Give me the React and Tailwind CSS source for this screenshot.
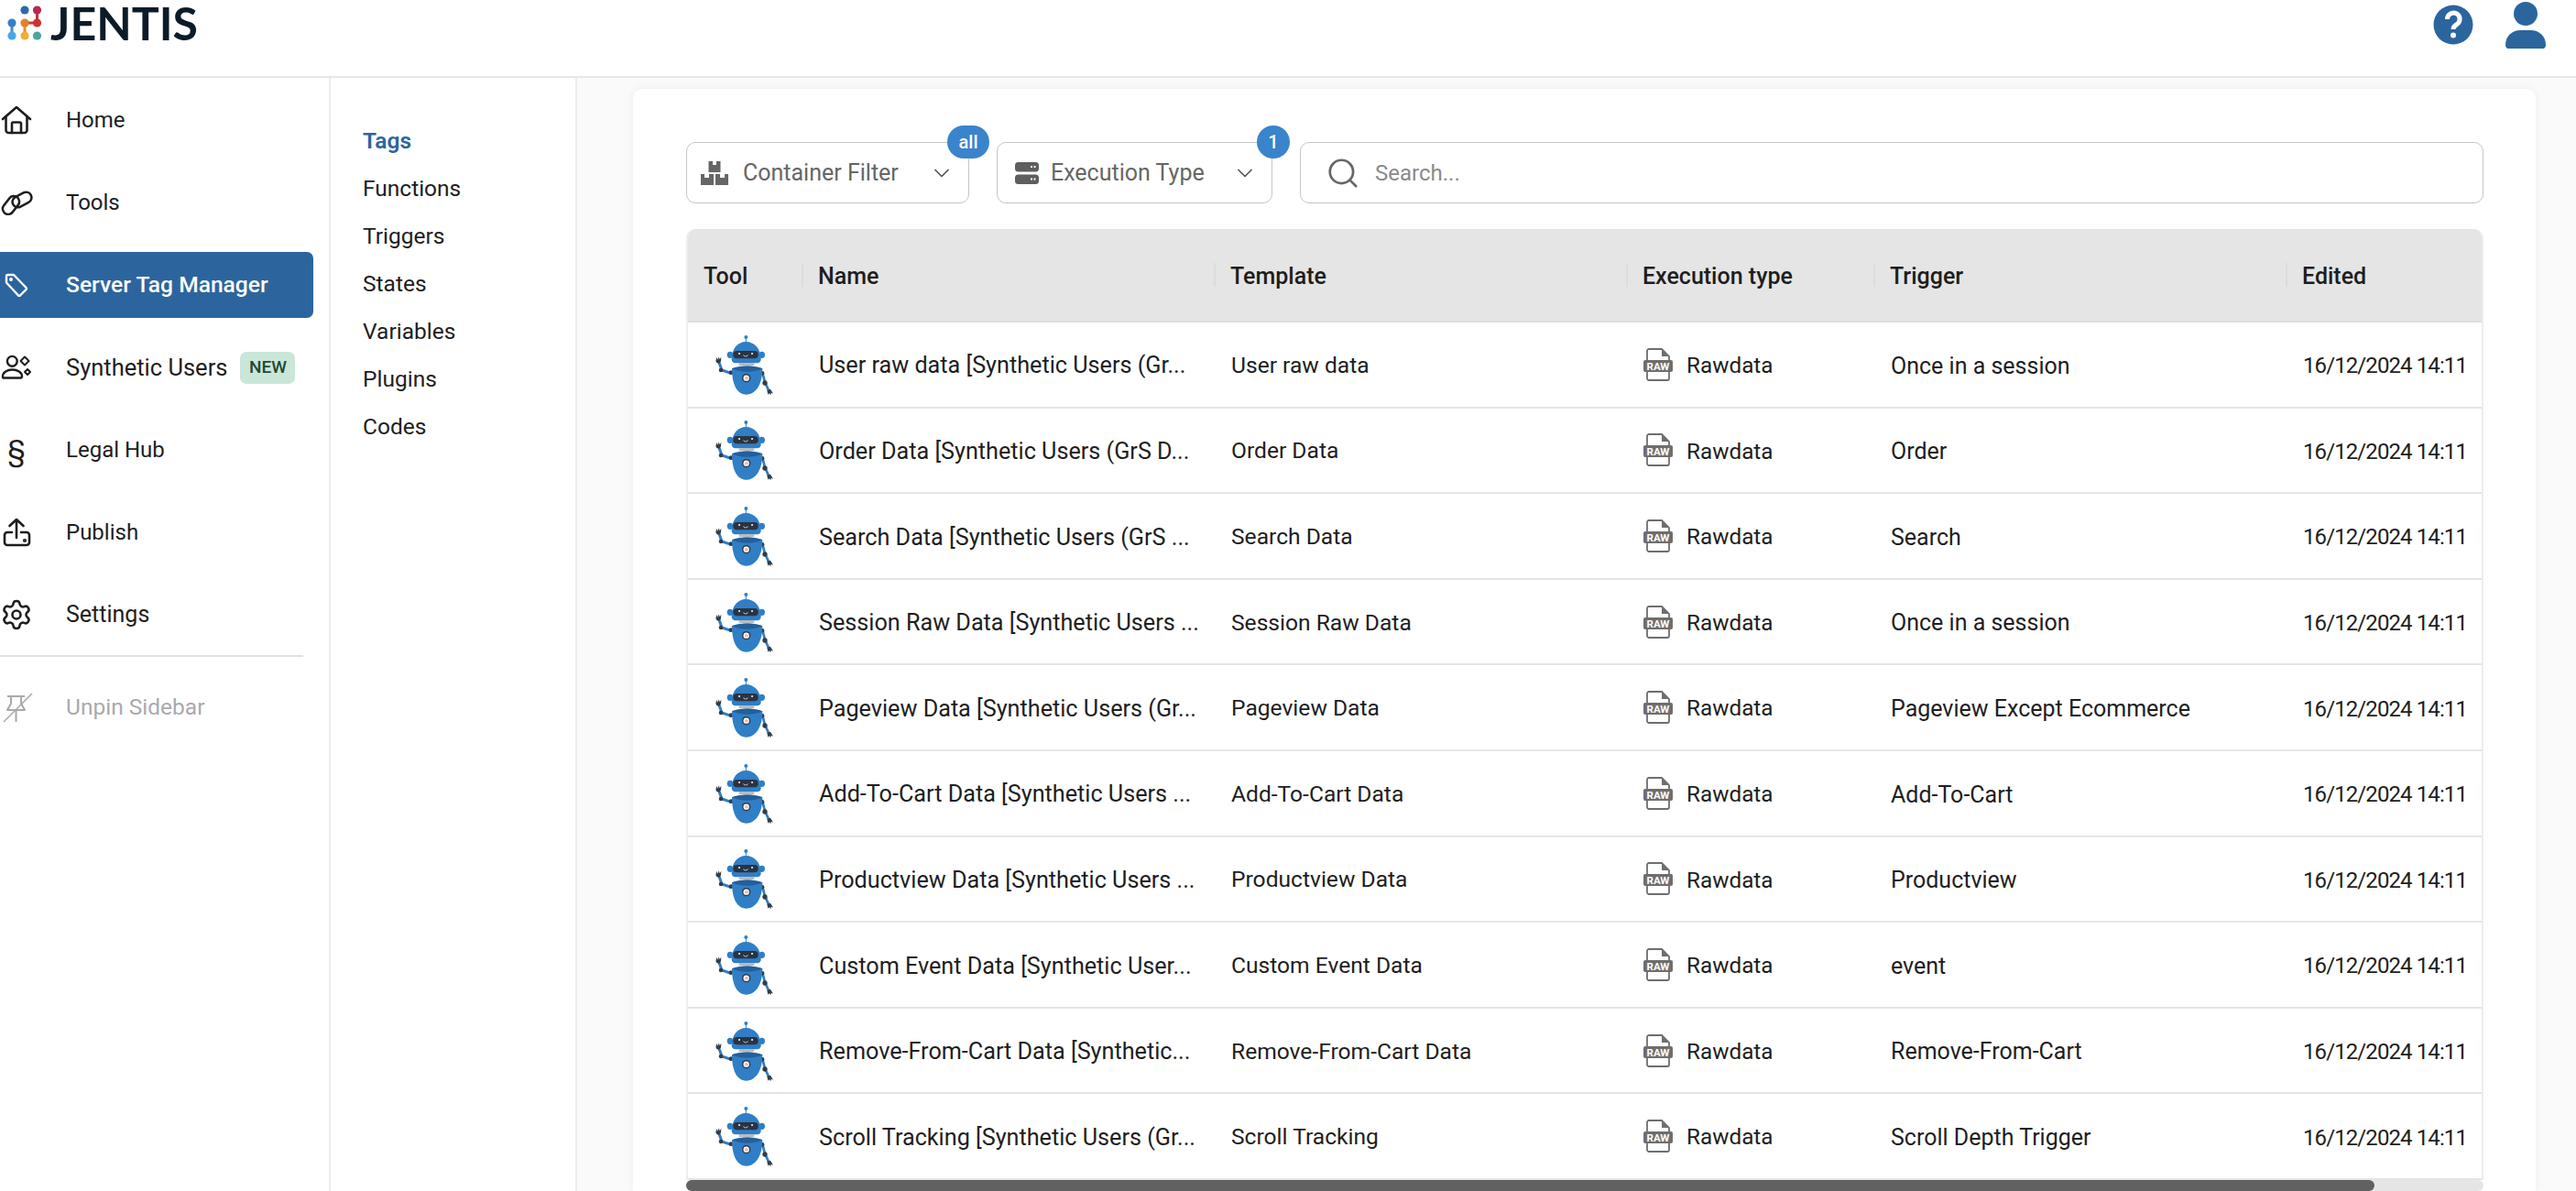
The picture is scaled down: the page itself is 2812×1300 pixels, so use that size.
import React from 'react'
import { ChevronDown, Search, Settings } from 'lucide-react'

const rows = [
  ['User raw data [Synthetic Users (Gr...', 'User raw data', 'Once in a session'],
  ['Order Data [Synthetic Users (GrS D...', 'Order Data', 'Order'],
  ['Search Data [Synthetic Users (GrS ...', 'Search Data', 'Search'],
  ['Session Raw Data [Synthetic Users ...', 'Session Raw Data', 'Once in a session'],
  ['Pageview Data [Synthetic Users (Gr...', 'Pageview Data', 'Pageview Except Ecommerce'],
  ['Add-To-Cart Data [Synthetic Users ...', 'Add-To-Cart Data', 'Add-To-Cart'],
  ['Productview Data [Synthetic Users ...', 'Productview Data', 'Productview'],
  ['Custom Event Data [Synthetic User...', 'Custom Event Data', 'event'],
  ['Remove-From-Cart Data [Synthetic...', 'Remove-From-Cart Data', 'Remove-From-Cart'],
  ['Scroll Tracking [Synthetic Users (Gr...', 'Scroll Tracking', 'Scroll Depth Trigger'],
]

const subNav = ['Functions', 'Triggers', 'States', 'Variables', 'Plugins', 'Codes']

const Logo = () => (
  <svg width="44" height="40" viewBox="6 5 40 40" fill="none">
    <path d="M38.5 11V25" stroke="#c4303f" strokeWidth="3" />
    <path d="M25 25H38.5" stroke="#d0382f" strokeWidth="3" />
    <path d="M25 25V39" stroke="#ee8c34" strokeWidth="3" />
    <path d="M11 25V39" stroke="#3d8fd6" strokeWidth="3" />
    <circle cx="25" cy="11" r="4.6" fill="#2b6ca8" />
    <circle cx="38.5" cy="11" r="4.6" fill="#b5284d" />
    <circle cx="11" cy="25" r="4.6" fill="#3480c8" />
    <circle cx="25" cy="25" r="4.6" fill="#e67e30" />
    <circle cx="38.5" cy="25" r="4.6" fill="#cc3330" />
    <circle cx="11" cy="39" r="4.6" fill="#4aa6e6" />
    <circle cx="25" cy="39" r="4.6" fill="#f0ad3a" />
    <circle cx="38.5" cy="39" r="4.6" fill="#4ba59c" />
  </svg>
)

const HomeIcon = () => (
  <svg width="36" height="34" viewBox="0 0 36 34" fill="none" stroke="#1e1e1e" strokeWidth="2.6" strokeLinecap="round" strokeLinejoin="round">
    <path d="M3 16 18 3l15 13" />
    <path d="M6.500 13v15a3 3 0 0 0 3 3h17a3 3 0 0 0 3-3V13" />
    <path d="M13 31V21a1.500 1.500 0 0 1 1.500-1.500h7A1.500 1.500 0 0 1 23 21v10" />
  </svg>
)

const ToolsIcon = () => (
  <svg width="36" height="28" viewBox="0 0 36 28" fill="none" stroke="#1e1e1e" strokeWidth="2.500">
    <rect x="1" y="11" width="22" height="12" rx="6" transform="rotate(-52 12 17)" />
    <rect x="13" y="5" width="22" height="12" rx="6" transform="rotate(-28 24 11)" />
  </svg>
)

const TagIcon = () => (
  <svg width="26" height="26" viewBox="0 0 26 26" fill="none" stroke="#fff" strokeWidth="2.4" strokeLinejoin="round">
    <path d="M2 3.500A1.500 1.500 0 0 1 3.500 2H10l13.500 14a1.500 1.500 0 0 1 0 2L17 24.500a1.500 1.500 0 0 1-2 0L2 10.500Z" />
    <circle cx="7" cy="7" r="0.8" fill="#fff" />
  </svg>
)

const SyntheticIcon = () => (
  <svg width="36" height="36" viewBox="0 0 36 36" fill="none" stroke="#1e1e1e" strokeWidth="2.4" strokeLinejoin="round">
    <circle cx="13.300" cy="11.300" r="5.400" />
    <path d="M3.500 29.500h19a1.500 1.500 0 0 0 1.500-1.500c0-4.500-5-7.500-10.500-7.500S3 23.500 3 28a1.500 1.500 0 0 0 .5 1.500Z" />
    <path d="M27 6.500l4.500 4.500-4.500 4.500-4.500-4.500Z" strokeWidth="2" />
    <path d="M30 20l3 3-3 3-3-3Z" strokeWidth="2" />
  </svg>
)

const PublishIcon = () => (
  <svg width="36" height="34" viewBox="0 0 36 34" fill="none" stroke="#1e1e1e" strokeWidth="2.6" strokeLinecap="round" strokeLinejoin="round">
    <path d="M18 23V3M10.500 10 18 3l7.500 7" />
    <path d="M13 17H8a3 3 0 0 0-3 3v8a3 3 0 0 0 3 3h21a3 3 0 0 0 3-3v-8a3 3 0 0 0-3-3h-6" />
    <circle cx="27" cy="26" r="0.8" fill="#1e1e1e" />
  </svg>
)

const UnpinIcon = () => (
  <svg width="36" height="34" viewBox="0 0 36 34" fill="none" stroke="#a9a9ae" strokeWidth="2" strokeLinejoin="round">
    <path d="M8 5H27M12 5v8l-4 7h19l-4-7V5M17.500 20v13" />
    <path d="M35 2 4 33" strokeWidth="1.500" />
  </svg>
)

const Robot = () => (
  <svg width="70" height="70" viewBox="80 40 210 210">
    <path d="M140 170 110 160 100 132" fill="none" stroke="#2f7ec6" strokeWidth="9" strokeLinecap="round" />
    <path d="M90 130l3-12 4 8 3-10 3 9 5-8-1 14-6 7-8-2Z" fill="#333c46" />
    <circle cx="107" cy="160" r="7" fill="#333c46" />
    <path d="M243 168 251 200 264 228" fill="none" stroke="#2f7ec6" strokeWidth="8" strokeLinecap="round" />
    <circle cx="251" cy="202" r="8" fill="#333c46" />
    <path d="M258 225l11-3 9 15-7-3-1 8-5-6-4 4Z" fill="#333c46" />
    <circle cx="242" cy="170" r="7" fill="#333c46" />
    <circle cx="140" cy="168" r="7" fill="#333c46" />
    <path d="M189 52v16" stroke="#2f7ec6" strokeWidth="3" />
    <circle cx="189" cy="52" r="6" fill="#2f7ec6" />
    <ellipse cx="137" cy="110" rx="10" ry="11" fill="#2f7ec6" />
    <ellipse cx="241" cy="110" rx="10" ry="11" fill="#2f7ec6" />
    <path d="M142 125c0-35 20-58 47-58s49 23 49 58c0 8-6 12-12 12h-72c-6 0-12-4-12-12Z" fill="#2f7ec6" />
    <rect x="147" y="97" width="82" height="25" rx="12" fill="#2b3340" />
    <circle cx="167" cy="106" r="3" fill="#fff" />
    <circle cx="209" cy="106" r="3" fill="#fff" />
    <path d="M181 110a7 5 0 0 0 14 0" fill="none" stroke="#fff" strokeWidth="2" />
    <rect x="166" y="136" width="50" height="10" fill="#b8bcc0" />
    <path d="M143 155c0 50 15 85 47 85s53-35 53-85c-30-11-70-11-100 0Z" fill="#2f7ec6" />
    <path d="M143 155c30-11 70-11 100 0-25 14-75 14-100 0Z" fill="#245f99" />
    <circle cx="190" cy="186" r="14" fill="#333c46" />
    <circle cx="190" cy="186" r="9.500" fill="#fff" />
    <path d="M187 191l2-10M193 191l1-8" stroke="#e36a4f" strokeWidth="2.500" />
  </svg>
)

const RawIcon = () => (
  <svg width="32" height="36" viewBox="0 0 32 36" className="shrink-0">
    <path d="M4 13V3a2 2 0 0 1 2-2h14l8 8v4M28 26v7a2 2 0 0 1-2 2H6a2 2 0 0 1-2-2v-7" fill="none" stroke="#6e6e6e" strokeWidth="1.800" />
    <path d="M20 1v8h8Z" fill="#6e6e6e" />
    <rect x="0" y="13" width="32" height="13" rx="2" fill="#6e6e6e" />
    <text x="16" y="23.500" textAnchor="middle" fontSize="11.500" fontWeight="700" fill="#fff" fontFamily="Roboto, sans-serif">RAW</text>
  </svg>
)

const NavItem = ({ icon, label, active, children, muted, textSize = 'text-[24px]' }) => (
  <div className={`flex h-[72px] w-[342px] items-center rounded-r-[7px] ${active ? 'bg-[#2c659e] text-white font-medium' : muted ? 'text-[#a9a9ae]' : 'text-[#1e1e1e]'}`}>
    <div className="flex w-[36px] shrink-0 items-center justify-center">{icon}</div>
    <span className={`ml-[36px] ${textSize}`}>{label}</span>
    {children}
  </div>
)

const FilterBox = ({ icon, label, badge, className, iconGap }) => (
  <div className={`relative flex h-[67px] shrink-0 items-center rounded-[10px] border-[1.5px] border-[#c6c6c6] bg-white text-[25px] text-[#666666] ${className}`}>
    {icon}
    <span className={iconGap}>{label}</span>
    <ChevronDown size={28} strokeWidth={1.500} className="absolute right-[15px] top-[19px] text-[#555555]" />
    {badge}
  </div>
)

export default function App() {
  return (
    <div className="flex h-[1300px] w-full flex-col overflow-hidden bg-white font-['Roboto',sans-serif] text-[#1e1e1e]">
      <header className="flex h-[85px] shrink-0 justify-between border-b-2 border-[#e8e8e8] pr-[33px]">
        <div className="flex h-[50px] items-center pl-[6px]">
          <Logo />
          <span className="ml-[5px] font-['Lato',sans-serif] text-[50px] font-bold leading-[40px] text-[#0c1b28]">JENTIS</span>
        </div>
        <div className="flex items-start gap-[35px]">
          <svg width="44" height="44" viewBox="-22 -22 44 44" className="mt-[5px]">
            <circle r="21.500" fill="#2c659e" />
            <path d="M-6.500-6a6.800 6.800 0 1 1 10.500 5.500C1.500 1 0 2 0 5" fill="none" stroke="#fff" strokeWidth="5" />
            <circle cy="11.500" r="3" fill="#fff" />
          </svg>
          <svg width="44" height="52" viewBox="0 0 44 52" className="mt-[1px]">
            <circle cx="22" cy="14" r="13" fill="#2c659e" />
            <path d="M0 48c0-10 8-16 16-16h12c8 0 16 6 16 16 0 2-1 4-3 4H3c-2 0-3-2-3-4Z" fill="#2c659e" />
          </svg>
        </div>
      </header>

      <div className="flex min-h-0 flex-1">
        <aside className="w-[361px] shrink-0 border-r-2 border-[#ececec] pt-[10px]">
          <div className="flex flex-col gap-[18px]">
            <NavItem icon={<HomeIcon />} label="Home" />
            <NavItem icon={<ToolsIcon />} label="Tools" />
            <NavItem icon={<TagIcon />} label="Server Tag Manager" textSize="text-[24.600px]" active />
            <NavItem icon={<SyntheticIcon />} label="Synthetic Users" textSize="text-[25.500px]">
              <span className="ml-[14px] flex h-[35px] w-[60px] items-center justify-center rounded-[7px] bg-[#c9e6d9] text-[19px] font-medium text-[#1f4a33]">NEW</span>
            </NavItem>
            <NavItem icon={<span className="text-[32px] leading-none text-[#1e1e1e]">§</span>} label="Legal Hub" />
            <NavItem icon={<PublishIcon />} label="Publish" />
            <NavItem icon={<Settings size={36} strokeWidth={1.700} className="text-[#1e1e1e]" />} label="Settings" textSize="text-[25px]" />
          </div>
          <div className="mb-[19px] mt-[8px] h-[2px] w-[331px] bg-[#e2e2e2]" />
          <NavItem icon={<UnpinIcon />} label="Unpin Sidebar" textSize="text-[24.500px]" muted />
        </aside>

        <nav className="w-[269px] shrink-0 border-r-2 border-[#ececec] pl-[35px] pt-[43px] text-[24.500px]">
          <div className="flex h-[52px] items-center font-semibold text-[#2c659e]">Tags</div>
          {subNav.map((item) => (
            <div key={item} className="flex h-[52px] items-center">{item}</div>
          ))}
        </nav>

        <main className="min-w-0 flex-1 bg-[#fafafa] pl-[61px] pr-[44px] pt-[12px]">
          <div className="h-full rounded-t-[10px] bg-white pl-[58px] pr-[57px] pt-[58px] shadow-[0_0_8px_rgba(0,0,0,0.06)]">
            <div className="flex gap-[30px]">
              <FilterBox
                className="w-[309px] pl-[15px]"
                iconGap="ml-[16px]"
                label="Container Filter"
                icon={
                  <svg width="30" height="26" viewBox="0 0 30 26" fill="#666666" className="shrink-0">
                    <path d="M8.500 0H13v4h4V0h4.500v12h-13Z" />
                    <path d="M0 14h4v4h5v-4h5v12H0Z" />
                    <path d="M16 14h5v4h5v-4h4v12H16Z" />
                  </svg>
                }
                badge={<span className="absolute -right-[23px] -top-[19px] flex h-[36px] w-[46px] items-center justify-center rounded-full bg-[#3a84cb] text-[20px] font-medium text-white">all</span>}
              />
              <FilterBox
                className="w-[301px] pl-[19px]"
                iconGap="ml-[13px]"
                label="Execution Type"
                icon={
                  <svg width="26" height="24" viewBox="0 0 26 24" className="shrink-0">
                    <rect width="26" height="10.500" rx="3.500" fill="#5e5e5e" />
                    <rect y="13.500" width="26" height="10.500" rx="3.500" fill="#5e5e5e" />
                    <path d="M17 4h2v2h-2ZM20.500 4h2v2h-2ZM17 17.500h2v2h-2ZM20.500 17.500h2v2h-2Z" fill="#fff" />
                  </svg>
                }
                badge={<span className="absolute -right-[20px] -top-[19px] flex h-[36px] w-[36px] items-center justify-center rounded-full bg-[#3a84cb] text-[20px] font-medium text-white">1</span>}
              />
              <div className="flex h-[67px] flex-1 items-center rounded-[10px] border-[1.5px] border-[#c6c6c6] pl-[27px] text-[24px] text-[#8a8a8a]">
                <Search size={38} strokeWidth={1.700} className="shrink-0 text-[#666666]" />
                <span className="ml-[16px]">Search...</span>
              </div>
            </div>

            <div className="mt-[28px] overflow-hidden rounded-t-[10px] border-x-2 border-[#ededed]">
              <div className="grid h-[102px] grid-cols-[124px_450px_450px_270px_450px_1fr] items-center border-b-2 border-[#dedede] bg-[#e5e5e5] text-[25px] font-medium">
                {['Tool', 'Name', 'Template', 'Execution type', 'Trigger', 'Edited'].map((title, i) => (
                  <div key={title} className={`flex h-[26px] items-center pt-[3px] ${i === 0 ? 'pl-[17px]' : 'border-l-2 border-[#dcdcdc] pl-[16px]'}`}>{title}</div>
                ))}
              </div>
              {rows.map((row) => (
                <div key={row[0]} className="grid h-[93.6px] grid-cols-[126px_450px_450px_270px_450px_1fr] items-center border-b-2 border-[#e5e5e5] text-[24.600px]">
                  <div className="pl-[27px] pt-[2px]"><Robot /></div>
                  <div className="truncate pl-[17px] pt-[3px] text-[25.200px]">{row[0]}</div>
                  <div className="truncate pl-[17px] pt-[3px]">{row[1]}</div>
                  <div className="flex items-center pl-[17px]">
                    <RawIcon />
                    <span className="ml-[15px] pt-[3px] text-[24.300px]">Rawdata</span>
                  </div>
                  <div className="truncate pl-[17px] pt-[3px] text-[25px]">{row[2]}</div>
                  <div className="whitespace-nowrap pl-[17px] pt-[3px] text-[24px] tracking-[-0.9px]">16/12/2024 14:11</div>
                </div>
              ))}
            </div>
            <div className="h-[12px] rounded-[6px] bg-[#e5e5e5]">
              <div className="h-full w-[1843px] rounded-[6px] bg-[#616161]" />
            </div>
          </div>
        </main>
      </div>
    </div>
  )
}
